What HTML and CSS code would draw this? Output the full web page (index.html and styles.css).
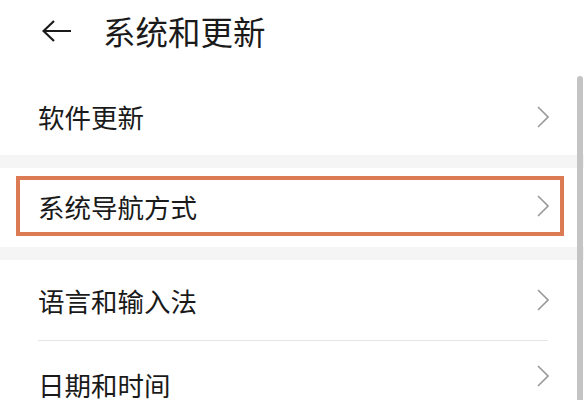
FILE: index.html
```html
<!DOCTYPE html>
<html lang="zh-CN">
<head>
    <meta charset="utf-8">
    <link rel="stylesheet" href="styles.css">
</head>
<body>
<header class="topbar">
    <svg class="back" width="30" height="22" viewBox="0 0 30 22">
        <path d="M29 11 H2 M12 1 L1.5 11 L12 21" fill="none" stroke="#1a1a1a" stroke-width="2.2"/>
    </svg>
    <span class="title">系统和更新</span>
</header>
<section class="group">
    <div class="row first">
        <span>软件更新</span>
        <svg class="chev" width="12" height="22" viewBox="0 0 12 22"><path d="M1 1 L11 11 L1 21" fill="none" stroke="#9a9a9a" stroke-width="1.6"/></svg>
    </div>
</section>
<section class="group boxed">
    <div class="row marked">
        <span>系统导航方式</span>
        <svg class="chev" width="12" height="22" viewBox="0 0 12 22"><path d="M1 1 L11 11 L1 21" fill="none" stroke="#9a9a9a" stroke-width="1.6"/></svg>
    </div>
</section>
<section class="group">
    <div class="row">
        <span>语言和输入法</span>
        <svg class="chev" width="12" height="22" viewBox="0 0 12 22"><path d="M1 1 L11 11 L1 21" fill="none" stroke="#9a9a9a" stroke-width="1.6"/></svg>
    </div>
    <div class="divider"></div>
    <div class="row last">
        <span>日期和时间</span>
        <svg class="chev" width="12" height="22" viewBox="0 0 12 22"><path d="M1 1 L11 11 L1 21" fill="none" stroke="#9a9a9a" stroke-width="1.6"/></svg>
    </div>
</section>
<div class="scrollbar"></div>
</body>
</html>
```
FILE: styles.css
```css
html {
    overflow: hidden;
}
body {
    margin: 0;
    padding: 0;
    width: 584px;
    height: 400px;
    overflow: hidden;
    background-color: #f5f5f5;
    font-family: "Noto Sans CJK SC", "Noto Sans", sans-serif;
    color: #1a1a1a;
}
.topbar {
    display: flex;
    align-items: center;
    height: 62px;
    padding: 0 0 16px 42px;
    background-color: white;
}
.back {
    display: block;
}
.title {
    margin-left: 31px;
    font-size: 32.5px;
    line-height: 40px;
}
.group {
    background-color: white;
    margin-bottom: 13px;
}
.group.boxed {
    padding: 8px 20px 11px 16px;
}
.row {
    display: flex;
    align-items: center;
    justify-content: space-between;
    height: 80px;
    padding: 0 35px 0 38px;
    font-size: 26.5px;
}
.row.first {
    height: 77px;
}
.row.last {
    height: 59px;
    align-items: flex-start;
    padding-top: 24px;
    box-sizing: border-box;
}
.chev {
    display: block;
}
.row.marked {
    height: 52px;
    padding: 0 11px 0 18px;
    border: 4px solid #dc7a54;
}
.divider {
    height: 1px;
    margin: 0 36px 0 38px;
    background-color: #e6e6e6;
}
.scrollbar {
    position: absolute;
    top: 76px;
    left: 577px;
    width: 6px;
    height: 324px;
    border-radius: 3px 3px 0 0;
    background-color: #c4c4c4;
}
```
